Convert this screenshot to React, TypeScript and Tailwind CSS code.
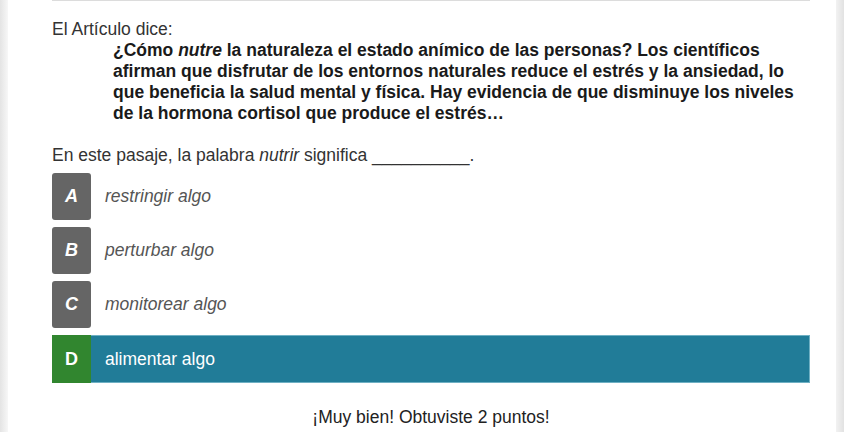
import React from 'react';

const options = [
  { letter: 'A', text: 'restringir algo', correct: false },
  { letter: 'B', text: 'perturbar algo', correct: false },
  { letter: 'C', text: 'monitorear algo', correct: false },
  { letter: 'D', text: 'alimentar algo', correct: true },
];

const App = () => {
  return (
    <div
      className="flex h-[432px] w-[844px] overflow-hidden bg-white text-[17.5px] leading-[21px] text-[#333]"
      style={{ fontFamily: '"Liberation Sans", Arial, sans-serif' }}
    >
      <div className="w-[8px] shrink-0 bg-gradient-to-r from-[#e4e4e4] to-[#f7f7f7]" />
      <div className="flex-1 pl-[44px] pr-[26px]">
        <div className="h-px bg-[#dcdcdc]" />
        <div className="pt-[18px]">
          <p>El Artículo dice:</p>
          <p className="ml-[61px] whitespace-nowrap font-bold text-[#1a1a1a]">
            ¿Cómo <i>nutre</i> la naturaleza el estado anímico de las personas? Los científicos
            <br />
            afirman que disfrutar de los entornos naturales reduce el estrés y la ansiedad, lo
            <br />
            que beneficia la salud mental y física. Hay evidencia de que disminuye los niveles
            <br />
            de la hormona cortisol que produce el estrés…
          </p>
          <p className="mt-[21px]">
            En este pasaje, la palabra <i>nutrir</i> significa __________.
          </p>
        </div>
        <div className="mt-[7px] flex flex-col gap-[7px]">
          {options.map((o) =>
            o.correct ? (
              <div
                key={o.letter}
                className="flex h-[48px] items-stretch border border-[#6fb0c3] bg-[#217c98] text-white"
              >
                <div className="-my-px -ml-px flex w-[39px] items-center justify-center bg-[#31862f] text-[18px] font-bold">
                  {o.letter}
                </div>
                <div className="flex items-center pl-[14px]">{o.text}</div>
              </div>
            ) : (
              <div key={o.letter} className="flex h-[47px] items-center">
                <div className="flex h-full w-[39px] items-center justify-center rounded-[3px] bg-[#656565] text-[18px] font-bold italic text-white">
                  {o.letter}
                </div>
                <div className="pl-[14px] italic text-[#555]">{o.text}</div>
              </div>
            )
          )}
        </div>
        <p className="mt-[24px] text-center text-[#222]">¡Muy bien! Obtuviste 2 puntos!</p>
      </div>
      <div className="w-[8px] shrink-0 bg-gradient-to-r from-[#f2f2f2] to-[#e2e2e2]" />
    </div>
  );
};

export default App;
